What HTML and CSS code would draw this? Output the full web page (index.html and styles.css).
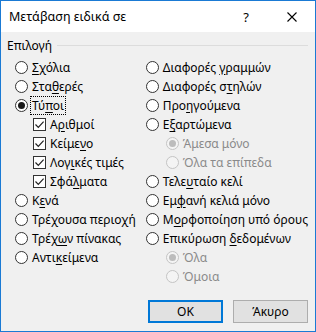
FILE: index.html
```html
<!DOCTYPE html>
<html lang="el">
<head>
  <meta charset="UTF-8" />
  <title>Μετάβαση ειδικά σε</title>
  <link rel="stylesheet" href="styles.css">
</head>
<body>
  <div class="dialog">
    <div class="titlebar">
      <span class="title">Μετάβαση ειδικά σε</span>
      <span class="help">?</span>
      <span class="close">
        <svg width="10" height="10" viewBox="0 0 10 10"><path d="M0.5 0.5 L9.5 9.5 M9.5 0.5 L0.5 9.5" stroke="#000" stroke-width="1.1" fill="none"/></svg>
      </span>
    </div>

    <div class="body">
      <div class="group-label"><span>Επιλογή</span><span class="rule"></span></div>

      <div class="columns">
        <div class="col">
          <div class="opt"><span class="radio"></span><span class="txt"><u>Σ</u>χόλια</span></div>
          <div class="opt"><span class="radio"></span><span class="txt">Στα<u>θ</u>ερές</span></div>
          <div class="opt"><span class="radio on"></span><span class="txt focus">Τύ<u>π</u>οι</span></div>
          <div class="opt sub"><span class="check"><svg width="11" height="11" viewBox="0 0 11 11"><path d="M1.5 5.5 L4.3 8.3 L9.6 2.6" stroke="#222" stroke-width="1.2" fill="none"/></svg></span><span class="txt">Α<u>ρ</u>ιθμοί</span></div>
          <div class="opt sub"><span class="check"><svg width="11" height="11" viewBox="0 0 11 11"><path d="M1.5 5.5 L4.3 8.3 L9.6 2.6" stroke="#222" stroke-width="1.2" fill="none"/></svg></span><span class="txt">Κείμε<u>ν</u>ο</span></div>
          <div class="opt sub"><span class="check"><svg width="11" height="11" viewBox="0 0 11 11"><path d="M1.5 5.5 L4.3 8.3 L9.6 2.6" stroke="#222" stroke-width="1.2" fill="none"/></svg></span><span class="txt">Λογ<u>ι</u>κές τιμές</span></div>
          <div class="opt sub"><span class="check"><svg width="11" height="11" viewBox="0 0 11 11"><path d="M1.5 5.5 L4.3 8.3 L9.6 2.6" stroke="#222" stroke-width="1.2" fill="none"/></svg></span><span class="txt">Σφά<u>λ</u>ματα</span></div>
          <div class="opt"><span class="radio"></span><span class="txt">Κ<u>ε</u>νά</span></div>
          <div class="opt"><span class="radio"></span><span class="txt">Τρέχουσα περιο<u>χ</u>ή</span></div>
          <div class="opt"><span class="radio"></span><span class="txt">Τρέχ<u>ω</u>ν πίνακας</span></div>
          <div class="opt"><span class="radio"></span><span class="txt">Αντι<u>κ</u>είμενα</span></div>
        </div>

        <div class="col">
          <div class="opt"><span class="radio"></span><span class="txt">Διαφορές <u>γ</u>ραμμών</span></div>
          <div class="opt"><span class="radio"></span><span class="txt">Διαφορές σ<u>τ</u>ηλών</span></div>
          <div class="opt"><span class="radio"></span><span class="txt">Προ<u>η</u>γούμενα</span></div>
          <div class="opt"><span class="radio"></span><span class="txt">Ε<u>ξ</u>αρτώμενα</span></div>
          <div class="opt sub off"><span class="radio on"></span><span class="txt">Άμεσα μόνο</span></div>
          <div class="opt sub off"><span class="radio"></span><span class="txt">Όλα τα επίπεδα</span></div>
          <div class="opt"><span class="radio"></span><span class="txt">Τελε<u>υ</u>ταίο κελί</span></div>
          <div class="opt"><span class="radio"></span><span class="txt">Εμ<u>φ</u>ανή κελιά μόνο</span></div>
          <div class="opt"><span class="radio"></span><span class="txt">Μ<u>ο</u>ρφοποίηση υπό όρους</span></div>
          <div class="opt"><span class="radio"></span><span class="txt">Επικύρωση <u>δ</u>εδομένων</span></div>
          <div class="opt sub off"><span class="radio on"></span><span class="txt">Όλα</span></div>
          <div class="opt sub off"><span class="radio"></span><span class="txt">Όμοια</span></div>
        </div>
      </div>

      <div class="buttons">
        <button class="btn default">OK</button>
        <button class="btn">Άκυρο</button>
      </div>
    </div>
  </div>
</body>
</html>
```

FILE: styles.css
```css
body { margin: 0; font-family: "Noto Sans", "Open Sans", sans-serif; font-size: 12px; color: #000; }
.dialog { width: 316px; height: 332px; box-sizing: border-box; border: 1px solid #1a7ad4; background: #f0f0f0; display: flex; flex-direction: column; }
.titlebar { height: 31px; background: #fff; display: flex; align-items: center; padding-left: 8px; }
.title { flex: 1; font-size: 12.5px; }
.help { width: 12px; margin-right: 35px; text-align: center; font-size: 13px; }
.close { width: 10px; height: 10px; margin-right: 18px; display: flex; }
.body { flex: 1; display: flex; flex-direction: column; padding: 5px 7px 8px 14px; }
.group-label { display: flex; align-items: center; height: 16px; margin-left: -8px; }
.group-label .rule { flex: 1; height: 1px; background: #dcdcdc; margin-left: 5px; margin-top: 1px; }
.columns { display: flex; margin-top: 5px; }
.col:first-child { width: 138px; }
.col { display: flex; flex-direction: column; }
.opt { height: 19px; display: flex; align-items: center; white-space: nowrap; }
.opt.sub { padding-left: 18px; }
.col:last-child .opt.sub { padding-left: 20px; }
.radio { width: 13px; height: 13px; box-sizing: border-box; border: 1px solid #333; border-radius: 50%; background: #fff; margin-right: 4px; display: flex; align-items: center; justify-content: center; }
.radio.on::after { content: ""; width: 7px; height: 7px; border-radius: 50%; background: #1a1a1a; }
.check { width: 13px; height: 13px; box-sizing: border-box; border: 1px solid #333; background: #fff; margin-right: 4px; display: flex; }
.txt u { text-underline-offset: 2px; }
.focus { outline: 1px dotted #000; outline-offset: 0; padding: 0 1px; margin-left: -1px; }
.off .radio { border-color: #c4c4c4; background: #f4f4f4; }
.off .radio.on::after { background: #bcbcbc; }
.off .txt { color: #8a8a8a; font-style: normal; }
.buttons { margin-top: auto; display: flex; justify-content: flex-end; gap: 10px; }
.btn { width: 75px; height: 23px; box-sizing: border-box; background: #e1e1e1; border: 1px solid #adadad; font-family: inherit; font-size: 12px; color: #000; padding: 0; }
.btn.default { border: 2px solid #0078d7; }
```
